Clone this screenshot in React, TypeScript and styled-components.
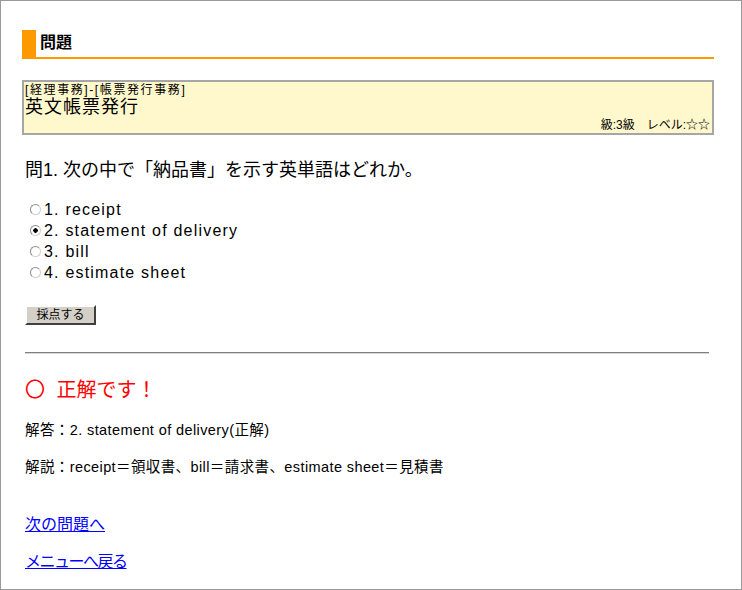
import React, { useState } from 'react';
import styled, { createGlobalStyle } from 'styled-components';

const GlobalStyle = createGlobalStyle`
    body {
        margin: 0;
        background: #fff;
        color: #000;
        font-family: "Liberation Sans", "Noto Sans CJK JP", sans-serif;
    }
`

const options = [
    '1. receipt',
    '2. statement of delivery',
    '3. bill',
    '4. estimate sheet',
];

function App() {
    const [picked, setPicked] = useState(1);

    return (
        <>
            <GlobalStyle />
            <Page>
                <Heading>問題</Heading>
                <InfoBox>
                    <Category>[経理事務]-[帳票発行事務]</Category>
                    <Title>英文帳票発行</Title>
                    <Level>級:3級　レベル:☆☆</Level>
                </InfoBox>
                <Question>問1. 次の中で「納品書」を示す英単語はどれか。</Question>
                <OptionList>
                    {options.map((it, i) => (
                        <OptionRow key={it}>
                            <Radio
                                type="radio"
                                name="answer"
                                checked={picked === i}
                                onChange={() => setPicked(i)}
                            />
                            {it}
                        </OptionRow>
                    ))}
                </OptionList>
                <GradeButton type="button">採点する</GradeButton>
                <Rule />
                <Result>〇 正解です！</Result>
                <Line>解答：2. statement of delivery(正解)</Line>
                <Line $gap={17}>解説：receipt＝領収書、bill＝請求書、estimate sheet＝見積書</Line>
                <NavLink href="#" $gap={38}>次の問題へ</NavLink>
                <NavLink href="#" $gap={17} $tight>メニューへ戻る</NavLink>
            </Page>
        </>
    )
}

export default App;

const Page = styled.div`
    width: 742px;
    height: 590px;
    box-sizing: border-box;
    border: 1px solid #999;
    padding: 29px 27px 0 21px;
    display: flex;
    flex-direction: column;
    align-items: flex-start;
`
const Heading = styled.h2`
    align-self: stretch;
    margin: 0;
    height: 27px;
    line-height: 26px;
    padding-left: 4px;
    border-left: 14px solid #ff9900;
    border-bottom: 2px solid #ff9900;
    font-size: 16px;
    font-weight: bold;
`
const InfoBox = styled.div`
    align-self: stretch;
    margin-top: 21px;
    border: 2px solid #a6a6a6;
    background: #fff8cc;
    padding: 1px 2px 1px 1px;
`
const Category = styled.div`
    font-size: 12px;
    line-height: 14px;
    letter-spacing: 1.6px;
`
const Title = styled.div`
    font-size: 18px;
    line-height: 21px;
    letter-spacing: 1px;
`
const Level = styled.div`
    font-size: 12px;
    line-height: 14px;
    text-align: right;
`
const Question = styled.p`
    margin: 25px 0 0 3px;
    font-size: 18px;
    line-height: 21px;
`
const OptionList = styled.div`
    margin: 18px 0 0 3px;
    display: flex;
    flex-direction: column;
`
const OptionRow = styled.label`
    display: flex;
    align-items: center;
    height: 21px;
    line-height: 21px;
    font-size: 16px;
    letter-spacing: 1.2px;
`
const Radio = styled.input`
    appearance: none;
    width: 11px;
    height: 11px;
    margin: 0 3px 0 5px;
    border: 1px solid #8c8c8c;
    border-right-color: #d0d0d0;
    border-bottom-color: #d0d0d0;
    border-radius: 50%;
    background: #fff;
    box-sizing: border-box;

    &:checked {
        background: radial-gradient(circle, #000 0 2px, #fff 2.5px);
    }
`
const GradeButton = styled.button`
    margin: 22px 0 0 3px;
    width: 71px;
    height: 20px;
    padding: 0;
    background: #d4d0c8;
    border: 2px solid;
    border-color: #fff #404040 #404040 #fff;
    font-family: inherit;
    font-size: 12px;
    line-height: 14px;
    color: #000;
`
const Rule = styled.hr`
    align-self: stretch;
    margin: 27px 5px 0 3px;
    height: 0;
    border: 0;
    border-top: 1px solid #808080;
    border-bottom: 1px solid #d8d8d8;
`
const Result = styled.div`
    margin: 25px 0 0 3px;
    font-size: 20px;
    line-height: 23px;
    word-spacing: 6px;
    color: #ff0000;
`
const Line = styled.div<{ $gap?: number }>`
    margin: ${p => p.$gap ?? 18}px 0 0 3px;
    font-size: 14.5px;
    line-height: 20px;
    letter-spacing: 0.4px;
`
const NavLink = styled.a<{ $gap: number; $tight?: boolean }>`
    margin: ${p => p.$gap}px 0 0 3px;
    font-size: 16px;
    line-height: 20px;
    letter-spacing: ${p => (p.$tight ? '-1.5px' : '0')};
    color: #0000ff;
    text-decoration: underline;
`
